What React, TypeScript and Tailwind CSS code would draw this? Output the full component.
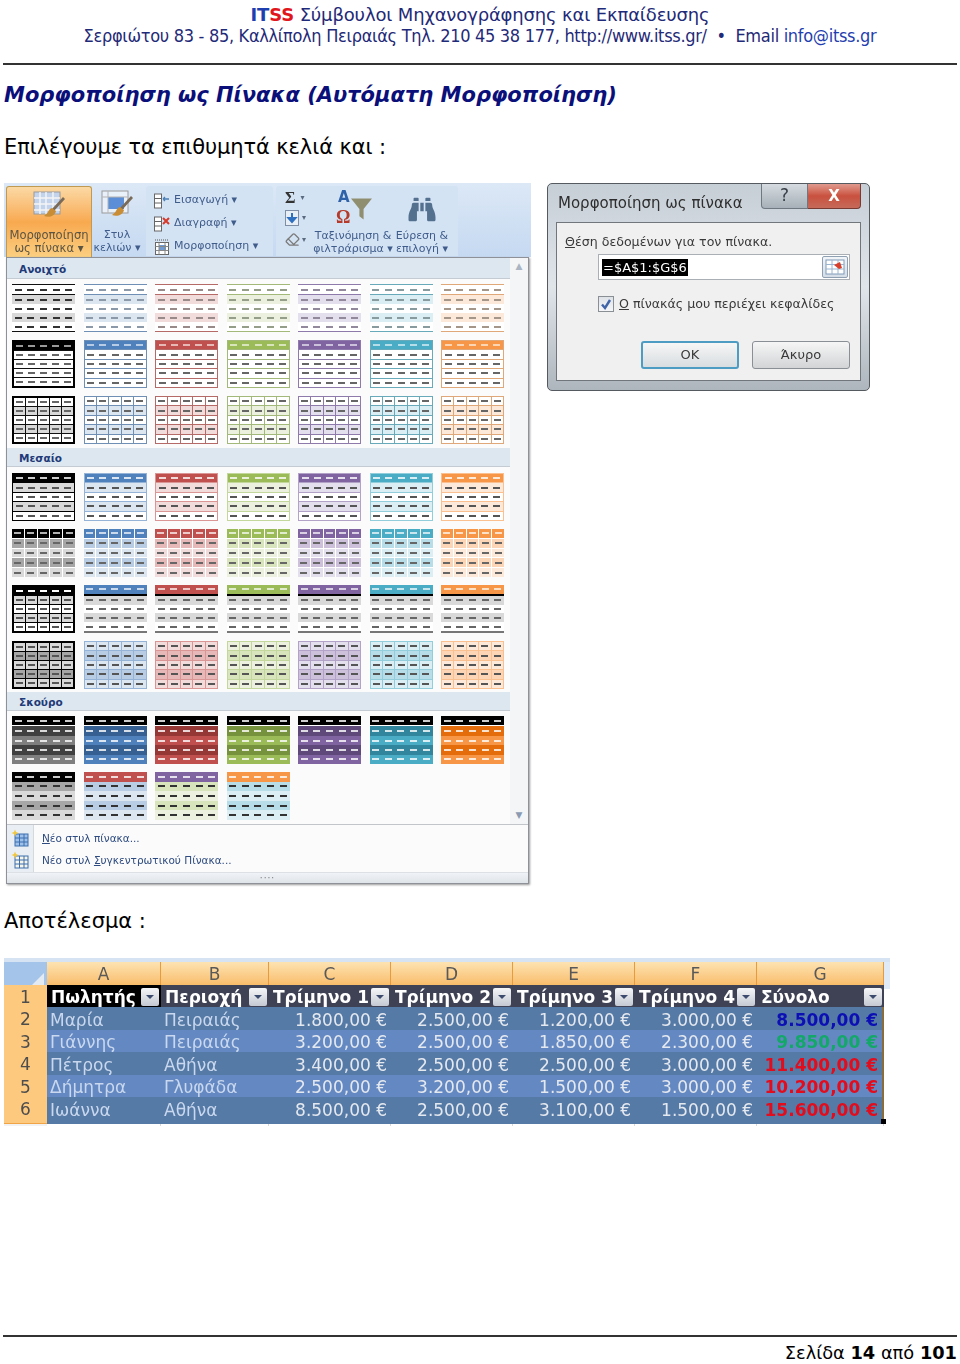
import { FaBinoculars } from 'react-icons/fa';
import { Eraser } from 'lucide-react';

const sans = 'font-["DejaVu_Sans","Noto_Sans",sans-serif]';

/* one string per theme colour, the swatches read them back as css variables */
const black = '[--h:#000000] [--d:#404040] [--m:#7f7f7f] [--a:#a6a6a6] [--b:#d9d9d9] [--l:#111111] [--f:#000000] [--k:#333333]';
const themes = [
  black,
  '[--h:#4f81bd] [--d:#366092] [--m:#4f81bd] [--a:#b8cce4] [--b:#dce6f1] [--l:#6f8fb5] [--f:#95b3d7] [--k:#8c99a8]',
  '[--h:#c0504d] [--d:#953735] [--m:#c0504d] [--a:#e6b8b7] [--b:#f2dcdb] [--l:#b56a68] [--f:#d99694] [--k:#998a8a]',
  '[--h:#9bbb59] [--d:#76923c] [--m:#9bbb59] [--a:#d7e4bc] [--b:#ebf1de] [--l:#a3b97a] [--f:#c3d69b] [--k:#959e88]',
  '[--h:#8064a2] [--d:#5f497a] [--m:#8064a2] [--a:#ccc0da] [--b:#e4dfec] [--l:#8f7bab] [--f:#b2a2c7] [--k:#928a9c]',
  '[--h:#4bacc6] [--d:#31859c] [--m:#4bacc6] [--a:#b7dee8] [--b:#daeef3] [--l:#68a9ba] [--f:#92cddc] [--k:#889ca0]',
  '[--h:#f79646] [--d:#e46c0a] [--m:#f79646] [--a:#fbd5b5] [--b:#fde9d9] [--l:#e0a878] [--f:#fac08f] [--k:#a4978a]',
];

type SwatchProps = {
  theme: string;
  head?: string;
  headDash?: string;
  rows: string[];
  dash?: string;
  frame?: string;
  line?: string;
  vline?: string;
};

function Swatch({ theme, head = '', headDash = 'bg-(--k)', rows, dash = 'bg-(--k)', frame = '', line = '', vline = '' }: SwatchProps) {
  const all = [head, ...rows];
  return (
    <div className={`${theme} w-[63px] h-[48px] flex flex-col overflow-hidden ${frame}`}>
      {all.map((bg, r) => (
        <div key={r} className={`flex-1 min-h-0 flex ${bg} ${r < all.length - 1 ? line : ''}`}>
          {[0, 1, 2, 3, 4].map((c) => (
            <div key={c} className={`flex-1 flex items-center justify-center ${c < 4 ? vline : ''}`}>
              <i className={`block w-[7px] h-[2px] ${r === 0 ? headDash : dash}`} />
            </div>
          ))}
        </div>
      ))}
    </div>
  );
}

const stripes = ['bg-(--b)', 'bg-white', 'bg-(--b)', 'bg-white'];
const tints = ['bg-(--a)', 'bg-(--b)', 'bg-(--a)', 'bg-(--b)'];

function LightRows() {
  return (
    <>
      {themes.map((t) => (
        <Swatch key={t} theme={t} head="bg-white border-b border-(--l)" rows={stripes} frame="border-y border-(--l)" />
      ))}
      {themes.map((t, i) => (
        <Swatch
          key={t}
          theme={t}
          head="bg-(--h)"
          headDash="bg-white/60"
          rows={['bg-white', 'bg-white', 'bg-white', 'bg-white']}
          dash="bg-[#666666]"
          frame={i === 0 ? 'border-2 border-black' : 'border border-(--l)'}
          line="border-b border-(--l)"
        />
      ))}
      {themes.map((t, i) => (
        <Swatch
          key={t}
          theme={t}
          head="bg-white"
          rows={stripes}
          dash="bg-[#666666]"
          headDash="bg-[#666666]"
          frame={i === 0 ? 'border-2 border-black' : 'border border-(--l)'}
          line="border-b border-(--l)"
          vline="border-r border-(--l)"
        />
      ))}
    </>
  );
}

function MediumRows() {
  return (
    <>
      {themes.map((t) => (
        <Swatch
          key={t}
          theme={t}
          head="bg-(--h)"
          headDash="bg-white/80"
          rows={stripes}
          dash="bg-[#555555]"
          frame="border border-(--f)"
          line="border-b border-(--f)"
        />
      ))}
      {themes.map((t) => (
        <Swatch
          key={t}
          theme={t}
          head="bg-(--h)"
          headDash="bg-white/70"
          rows={tints}
          dash="bg-[#666666]"
          line="border-b border-white"
          vline="border-r border-white"
        />
      ))}
      {themes.map((t, i) =>
        i === 0 ? (
          <Swatch key={t} theme={t} head="bg-black" headDash="bg-white" rows={stripes} dash="bg-[#555555]" frame="border-2 border-black" line="border-b border-black" vline="border-r border-black" />
        ) : (
          <Swatch key={t} theme={t} head="bg-(--h) border-b-2 border-black" headDash="bg-white/70" rows={['bg-[#d9d9d9]', 'bg-white', 'bg-[#d9d9d9]', 'bg-white']} dash="bg-[#666666]" frame="border-b-2 border-[#777777]" />
        ),
      )}
      {themes.map((t, i) => (
        <Swatch
          key={t}
          theme={t}
          head="bg-(--b)"
          rows={tints}
          headDash="bg-[#555555]"
          dash="bg-[#555555]"
          frame={i === 0 ? 'border-2 border-black' : 'border border-(--f)'}
          line="border-b border-(--f)"
          vline="border-r border-(--f)"
        />
      ))}
    </>
  );
}

function DarkRows() {
  return (
    <>
      {themes.map((t) => (
        <Swatch
          key={t}
          theme={t}
          head="bg-black border-b border-white"
          headDash="bg-white/80"
          rows={['bg-(--d)', 'bg-(--m)', 'bg-(--d)', 'bg-(--m)']}
          dash="bg-white/80"
        />
      ))}
      <Swatch theme={themes[0]} head="bg-black" headDash="bg-white/80" rows={tints} dash="bg-[#333333]" />
      <Swatch theme={themes[1]} head="bg-[#c0504d]" headDash="bg-white/80" rows={tints} dash="bg-[#333333]" />
      <Swatch theme={themes[3]} head="bg-[#8064a2]" headDash="bg-white/80" rows={tints} dash="bg-[#333333]" />
      <Swatch theme={themes[5]} head="bg-[#f79646]" headDash="bg-white/80" rows={tints} dash="bg-[#333333]" />
    </>
  );
}

function SectionHead({ label, className }: { label: string; className: string }) {
  return (
    <div className={`flex items-center pl-[12px] pt-[3px] bg-[#dde7f0] border-b border-[#c4cbd2] text-[10.5px] font-bold text-[#1f3a78] ${className}`}>
      {label}
    </div>
  );
}

function BrushIcon({ active }: { active?: boolean }) {
  return (
    <svg viewBox="0 0 34 32" className="w-[34px] h-[32px]">
      <rect x="2" y="2" width="26" height="22" fill={active ? '#c4d3ec' : '#e8f0fa'} stroke="#9a9a9a" />
      {active ? (
        <path d="M2 8h26M2 14h26M2 20h26M8 2v22M14 2v22M21 2v22" stroke="#f5f5f5" strokeWidth="1.4" />
      ) : (
        <>
          <rect x="8" y="8" width="16" height="12" fill="#5b8ed6" />
          <path d="M2 8h26M8 2v22" stroke="#b5b5b5" />
        </>
      )}
      <path d="M33 9 22 21l-2-2L31 7z" fill="#7a6a58" />
      <path d="M20 18c-4 1-3 5-8 8 5 2 11 0 12-5z" fill="#c98d35" />
    </svg>
  );
}

function RowTool({ kind, text }: { kind: 'insert' | 'delete' | 'format'; text: string }) {
  return (
    <div className="h-[17px] flex items-center gap-[4px] text-[11px] text-[#3f5c8a] whitespace-nowrap">
      <svg viewBox="0 0 16 16" className="w-[16px] h-[16px] shrink-0">
        {kind === 'format' ? (
          <>
            <path d="M1 1h14" stroke="#555" strokeDasharray="1 1" />
            <rect x="1.500" y="3.500" width="13" height="12" fill="#fff" stroke="#666" />
            <rect x="5" y="6" width="7" height="6" fill="#6f9bd2" />
            <path d="M1.500 7.500h13M1.500 11.500h13M5 3.500v12M11 3.500v12" stroke="#888" />
          </>
        ) : (
          <>
            <rect x="0.500" y="1" width="7" height="14" fill="#fff" stroke="#666" />
            <path d="M0.500 5.500h7M0.500 10h7" stroke="#666" />
            {kind === 'insert' ? (
              <path d="M9 6h6M9 6l2-2M9 6l2 2" stroke="#4a7fb5" strokeWidth="1.300" fill="none" />
            ) : (
              <path d="M9 2l6 6M15 2l-6 6" stroke="#d63a2a" strokeWidth="2" />
            )}
          </>
        )}
      </svg>
      {text}
    </div>
  );
}

function Ribbon() {
  const label = 'text-[11px] leading-[13px] text-[#3f5c8a]';
  const caret = 'text-[8px] leading-none text-[#5a6a80]';
  return (
    <div className={`h-[74px] flex pl-[2px] pt-[3px] bg-gradient-to-b from-[#dce8f6] to-[#c5d9f1] blur-[0.5px] ${sans}`}>
      <div className="w-[86px] h-[71px] flex flex-col items-center pt-[3px] rounded-t-[3px] border border-[#c09a50] border-b-0 bg-gradient-to-b from-[#fbd9a4] via-[#f8a94f] to-[#fbcf80]">
        <BrushIcon active />
        <span className="mt-[7px] text-center text-[11.600px] leading-[13px] whitespace-nowrap text-[#5c5442]">
          Μορφοποίηση
          <br />
          ως πίνακα ▾
        </span>
      </div>
      <div className="w-[48px] ml-[1px] flex flex-col items-center pt-[3px]">
        <BrushIcon />
        <span className={`${label} mt-[7px] text-center whitespace-nowrap`}>
          Στυλ
          <br />
          κελιών ▾
        </span>
      </div>
      <div className="w-[127px] h-[70px] ml-[5px] flex flex-col gap-[6px] pl-[8px] pt-[6px] rounded-t-[3px] bg-[#d4e3f4]">
        <RowTool kind="insert" text="Εισαγωγή ▾" />
        <RowTool kind="delete" text="Διαγραφή ▾" />
        <RowTool kind="format" text="Μορφοποίηση ▾" />
      </div>
      <div className="w-[182px] h-[70px] ml-[3px] flex rounded-t-[3px] bg-[#d4e3f4] pl-[9px] pt-[3px]">
        <div className="w-[30px] flex flex-col gap-[3px] text-[#333333]">
          <div className="flex items-center gap-[5px]">
            <span className="font-['Liberation_Serif',serif] font-bold text-[16px] leading-[18px]">Σ</span>
            <span className={caret}>▾</span>
          </div>
          <div className="flex items-center gap-[3px]">
            <svg viewBox="0 0 14 16" className="w-[14px] h-[16px]">
              <rect x="0.500" y="0.500" width="13" height="15" fill="#e8eef6" stroke="#7d8ea5" />
              <path d="M7 3v6M3.500 8 7 12l3.500-4z" stroke="#2e6fc0" strokeWidth="2" fill="#2e6fc0" />
            </svg>
            <span className={caret}>▾</span>
          </div>
          <div className="flex items-center gap-[2px] mt-[3px]">
            <Eraser className="w-[15px] h-[15px]" color="#7a7a7a" />
            <span className={caret}>▾</span>
          </div>
        </div>
        <div className="w-[76px] flex flex-col items-center">
          <div className="relative h-[40px] w-[42px]">
            <span className="absolute left-[6px] top-[1px] text-[15px] leading-[15px] font-bold text-[#2f62a8]">A</span>
            <span className="absolute left-[4px] top-[20px] font-['Liberation_Serif',serif] text-[18px] leading-[16px] font-bold text-[#b53a2a]">Ω</span>
            <svg viewBox="0 0 20 24" className="absolute left-[19px] top-[7px] w-[21px] h-[26px]">
              <path d="M0 2h20L12 12v10l-4-3v-7z" fill="#8f8f70" />
            </svg>
          </div>
          <span className={`${label} text-center whitespace-nowrap`}>
            Ταξινόμηση &amp;
            <br />
            φιλτράρισμα ▾
          </span>
        </div>
        <div className="w-[62px] flex flex-col items-center">
          <div className="h-[40px] flex items-start pt-[7px]">
            <FaBinoculars className="w-[30px] h-[27px]" color="#54708f" />
          </div>
          <span className={`${label} text-center whitespace-nowrap`}>
            Εύρεση &amp;
            <br />
            επιλογή ▾
          </span>
        </div>
      </div>
    </div>
  );
}

function TableStyleIcon({ corner }: { corner?: boolean }) {
  return (
    <svg viewBox="0 0 18 18" className="w-[18px] h-[18px]">
      <rect x="4" y="5" width="13" height="12" fill={corner ? '#f7f4e8' : '#9ec1ea'} stroke="#3d6fae" />
      <path d="M4 9h13M4 13h13M8.500 5v12M13 5v12" stroke="#3d6fae" />
      <path d="M4 0.500 5 3l2.500 1L5 5 4 7.500 3 5 0.500 4 3 3z" fill="#f2c73e" />
    </svg>
  );
}

const galleryGrid = 'grid grid-cols-[repeat(7,63px)] gap-x-[8.5px] gap-y-[8px] pl-[5px]';

function Gallery() {
  return (
    <div className={`h-[627px] mx-[2px] flex flex-col border border-[#8e9298] bg-[#fbfbfb] shadow-[1px_1px_2px_#999] blur-[0.6px] ${sans}`}>
      <div className="h-[566px] flex">
        <div className="flex-1 flex flex-col">
          <SectionHead label="Ανοιχτό" className="h-[21px] mb-[5px]" />
          <div className={galleryGrid}>
            <LightRows />
          </div>
          <SectionHead label="Μεσαίο" className="h-[19px] mt-[4px] mb-[6px]" />
          <div className={galleryGrid}>
            <MediumRows />
          </div>
          <SectionHead label="Σκούρο" className="h-[19px] mt-[3px] mb-[5px]" />
          <div className={galleryGrid}>
            <DarkRows />
          </div>
        </div>
        <div className="w-[18px] flex flex-col items-center justify-between pt-[4px] pb-[4px] bg-[#f4f5f6] text-[9px] leading-none">
          <span className="text-[#aab4c2]">▲</span>
          <span className="text-[#8a9ab2]">▼</span>
        </div>
      </div>
      <div className="flex-1 flex flex-col border-t border-[#c2c5c9]">
        <div className="h-[47px] flex">
          <div className="w-[27px] flex flex-col items-center gap-[4px] pt-[4px] bg-[#e9eef4] border-r border-[#d5d9de]">
            <TableStyleIcon />
            <TableStyleIcon corner />
          </div>
          <div className="flex-1 flex flex-col gap-[9px] pl-[8px] pt-[7px] text-[10.500px] leading-[13px] text-[#2d4b80]">
            <span>
              <u>Ν</u>έο στυλ πίνακα...
            </span>
            <span>
              Νέο στυλ <u>Σ</u>υγκεντρωτικού Πίνακα...
            </span>
          </div>
        </div>
        <div className="flex-1 flex items-center justify-center bg-gradient-to-b from-[#f0f3f7] to-[#dfe4ea] border-t border-[#dde0e4] text-[9px] leading-none tracking-[1px] text-[#777777]">
          ····
        </div>
      </div>
    </div>
  );
}

function Dialog() {
  return (
    <div className={`w-[323px] h-[208px] flex flex-col rounded-[5px] border border-[#555a60] bg-gradient-to-b from-[#c6ced6] via-[#e0e5ea] to-[#aeb6bd] blur-[0.5px] ${sans}`}>
      <div className="h-[38px] flex items-start justify-between pl-[10px] pr-[8px]">
        <span className="mt-[10px] text-[15px] leading-[18px] text-[#2e2e2e]">Μορφοποίηση ως πίνακα</span>
        <div className="flex h-[25px]">
          <div className="w-[47px] flex items-center justify-center rounded-bl-[4px] border border-t-0 border-[#6f7880] bg-gradient-to-b from-[#d5dbe0] to-[#a7b0b8] text-[17px] text-[#3a4048]">
            ?
          </div>
          <div className="w-[53px] flex items-center justify-center rounded-br-[4px] border border-t-0 border-l-0 border-[#7a3a34] bg-gradient-to-b from-[#df9a8e] via-[#c9503e] to-[#c66a5a] text-[15px] font-bold text-white">
            X
          </div>
        </div>
      </div>
      <div className="flex-1 mx-[8px] mb-[9px] flex flex-col border border-[#70767c] bg-[#f0f0f0] text-[12.600px] text-[#3a3a3a]">
        <div className="pl-[8px] mt-[10px] leading-[17px]">
          <u>Θ</u>έση δεδομένων για τον πίνακα.
        </div>
        <div className="ml-[41px] mr-[10px] mt-[4px] h-[26px] flex items-center justify-between border border-[#a9afb5] bg-white pl-[3px] pr-px">
          <span className="bg-black px-[1px] text-[13px] leading-[17px] text-white">=$A$1:$G$6</span>
          <div className="w-[26px] h-[22px] flex items-center justify-center border border-[#8fa0b2] rounded-[2px] bg-gradient-to-b from-[#f2f5f8] to-[#d4dde6]">
            <svg viewBox="0 0 20 16" className="w-[20px] h-[16px]">
              <rect x="1" y="1" width="18" height="14" fill="#fff" stroke="#7e9ab8" />
              <path d="M1 5.500h18M1 10h18M7 1v14M13 1v14" stroke="#9ab4d0" />
              <path d="M9 6l6-3 2 6-3 1z" fill="#d8402c" />
            </svg>
          </div>
        </div>
        <div className="ml-[41px] mt-[15px] flex items-center gap-[5px]">
          <div className="w-[16px] h-[16px] flex items-center justify-center border border-[#8a8f95] bg-gradient-to-b from-[#dfe3e8] to-[#f5f6f8]">
            <svg viewBox="0 0 12 12" className="w-[12px] h-[12px]">
              <path d="M2 6.500 5 10l5-8" fill="none" stroke="#3f64a8" strokeWidth="2.400" />
            </svg>
          </div>
          <span>
            <u>Ο</u> πίνακάς μου περιέχει κεφαλίδες
          </span>
        </div>
        <div className="ml-[84px] mt-[27px] flex gap-[13px] text-[13px]">
          <div className="w-[98px] h-[28px] flex items-center justify-center rounded-[3px] border-2 border-[#4c9cc4] bg-gradient-to-b from-[#f6f6f6] to-[#d8dde0]">OK</div>
          <div className="w-[98px] h-[28px] flex items-center justify-center rounded-[3px] border border-[#8a8f95] bg-gradient-to-b from-[#f6f6f6] to-[#d2d4d6]">Άκυρο</div>
        </div>
      </div>
    </div>
  );
}

const columns = ['A', 'B', 'C', 'D', 'E', 'F', 'G'];
const headers = ['Πωλητής', 'Περιοχή', 'Τρίμηνο 1', 'Τρίμηνο 2', 'Τρίμηνο 3', 'Τρίμηνο 4', 'Σύνολο'];
const totalBlue = 'text-[#0b0fb4]';
const totalGreen = 'text-[#12a868]';
const totalRed = 'text-[#e20c1c]';
const people = [
  { cells: ['Μαρία', 'Πειραιάς', '1.800,00 €', '2.500,00 €', '1.200,00 €', '3.000,00 €', '8.500,00 €'], total: totalBlue },
  { cells: ['Γιάννης', 'Πειραιάς', '3.200,00 €', '2.500,00 €', '1.850,00 €', '2.300,00 €', '9.850,00 €'], total: totalGreen },
  { cells: ['Πέτρος', 'Αθήνα', '3.400,00 €', '2.500,00 €', '2.500,00 €', '3.000,00 €', '11.400,00 €'], total: totalRed },
  { cells: ['Δήμητρα', 'Γλυφάδα', '2.500,00 €', '3.200,00 €', '1.500,00 €', '3.000,00 €', '10.200,00 €'], total: totalRed },
  { cells: ['Ιωάννα', 'Αθήνα', '8.500,00 €', '2.500,00 €', '3.100,00 €', '1.500,00 €', '15.600,00 €'], total: totalRed },
];

const gridCols = 'grid grid-cols-[43px_114px_108px_122px_122px_122px_122px_127px]';
const rowNum = 'flex items-center justify-center bg-[#fcc97f] border-b border-[#f0a445] text-[17px] text-[#4d4d4d]';

function FilterButton() {
  return (
    <div className="w-[18px] h-[18px] shrink-0 flex items-center justify-center rounded-[2px] bg-gradient-to-b from-[#f4f5f7] to-[#c5cad3]">
      <i className="block w-0 h-0 border-x-[4px] border-x-transparent border-t-[4px] border-t-[#3c4a6e]" />
    </div>
  );
}

function Sheet() {
  return (
    <div className={`w-[887px] ml-px blur-[0.4px] ${sans}`}>
      <div className="h-[4px] w-[886px] bg-[#d5e3f3]" />
      <div className="grid grid-cols-[43px_114px_108px_122px_122px_122px_122px_127px_6px] h-[23px]">
        <div className="flex items-end justify-end p-[3px] bg-[#a5c4ea] border-b border-[#8fb0dc]">
          <i className="block w-0 h-0 border-l-[12px] border-l-transparent border-b-[12px] border-b-[#e4eaf2]" />
        </div>
        {columns.map((c) => (
          <div key={c} className="flex items-center justify-center bg-gradient-to-b from-[#fde3b2] to-[#f8b860] border-r border-b border-[#e89a3c] text-[17px] text-[#595959]">
            {c}
          </div>
        ))}
        <div className="bg-[#dfeaf6]" />
      </div>
      <div className="relative">
        <div className={`${gridCols} h-[22px]`}>
          <div className={rowNum}>1</div>
          {headers.map((h, i) => (
            <div key={h} className={`flex items-center justify-between pl-[4px] pr-[2px] overflow-hidden border-b-2 border-white text-[17px] font-bold text-white whitespace-nowrap ${i === 0 ? 'bg-black' : 'bg-[#3f4254]'}`}>
              <span>{h}</span>
              <FilterButton />
            </div>
          ))}
        </div>
        {people.map((p, r) => (
          <div key={r} className={`${gridCols} h-[22.500px]`}>
            <div className={rowNum}>{r + 2}</div>
            {p.cells.map((v, c) => (
              <div
                key={c}
                className={`flex items-center text-[17px] whitespace-nowrap ${r % 2 === 0 ? 'bg-[#567aa6]' : 'bg-[#6488c2]'} ${c < 2 ? 'pl-[3px] text-[#c9d8ee]' : 'justify-end pr-[4px]'} ${
                  c === 6 ? `font-bold ${p.total} border-r-2 border-[#8a6d3a]` : c >= 2 ? 'text-[#e4e8ef]' : ''
                }`}
              >
                {v}
              </div>
            ))}
          </div>
        ))}
        <div className="ml-[43px] w-[837px] h-[2px] bg-[#a07a3c]" />
        <i className="absolute left-[877px] bottom-[-2px] block w-[5px] h-[5px] bg-black" />
      </div>
      <div className={`${gridCols} h-[4px]`}>
        <div className="bg-[#f2f2f2]" />
        {columns.map((c) => (
          <div key={c} className="border-r border-[#d8d8d8]" />
        ))}
      </div>
    </div>
  );
}

export default function App() {
  return (
    <div className={`w-[960px] h-[1364px] flex flex-col px-[3px] bg-white text-black overflow-hidden ${sans}`}>
      <header className="h-[65px] shrink-0 flex flex-col items-center pt-[4px] border-b-2 border-[#333333] text-[#1f2a78] text-[18px] leading-[21px] whitespace-nowrap">
        <div className="tracking-[-0.15px]">
          <span className="font-bold">
            <span className="text-[#1f3fb0]">IT</span>
            <span className="text-[#e0161c]">SS</span>
          </span>{' '}
          Σύμβουλοι Μηχανογράφησης και Εκπαίδευσης
        </div>
        <div className="[font-stretch:condensed] tracking-[-0.3px]">
          Σερφιώτου 83 - 85, Καλλίπολη Πειραιάς Τηλ. 210 45 38 177, http://www.itss.gr/ &nbsp;•&nbsp; Email <span className="text-[#1f3fb0]">info@itss.gr</span>
        </div>
      </header>
      <h1 className="h-[58px] shrink-0 flex items-center pl-px pt-[4px] text-[21px] font-bold italic text-[#0a0f7a]">
        Μορφοποίηση ως Πίνακα (Αυτόματη Μορφοποίηση)
      </h1>
      <p className="h-[46px] shrink-0 flex items-center pl-px pt-[4px] text-[21px] tracking-[-0.1px]">Επιλέγουμε τα επιθυμητά κελιά και :</p>
      <div className="mt-[14px] ml-px flex gap-[16px] items-start">
        <div className="w-[527px]">
          <Ribbon />
          <Gallery />
        </div>
        <Dialog />
      </div>
      <p className="h-[74px] shrink-0 flex items-center pl-px pt-[2px] text-[21px]">Αποτέλεσμα :</p>
      <Sheet />
      <footer className="mt-auto h-[29px] shrink-0 flex items-center justify-end pt-[6px] border-t-2 border-[#333333] text-[17.800px]">
        <span>
          Σελίδα <b>14</b> από <b>101</b>
        </span>
      </footer>
    </div>
  );
}
